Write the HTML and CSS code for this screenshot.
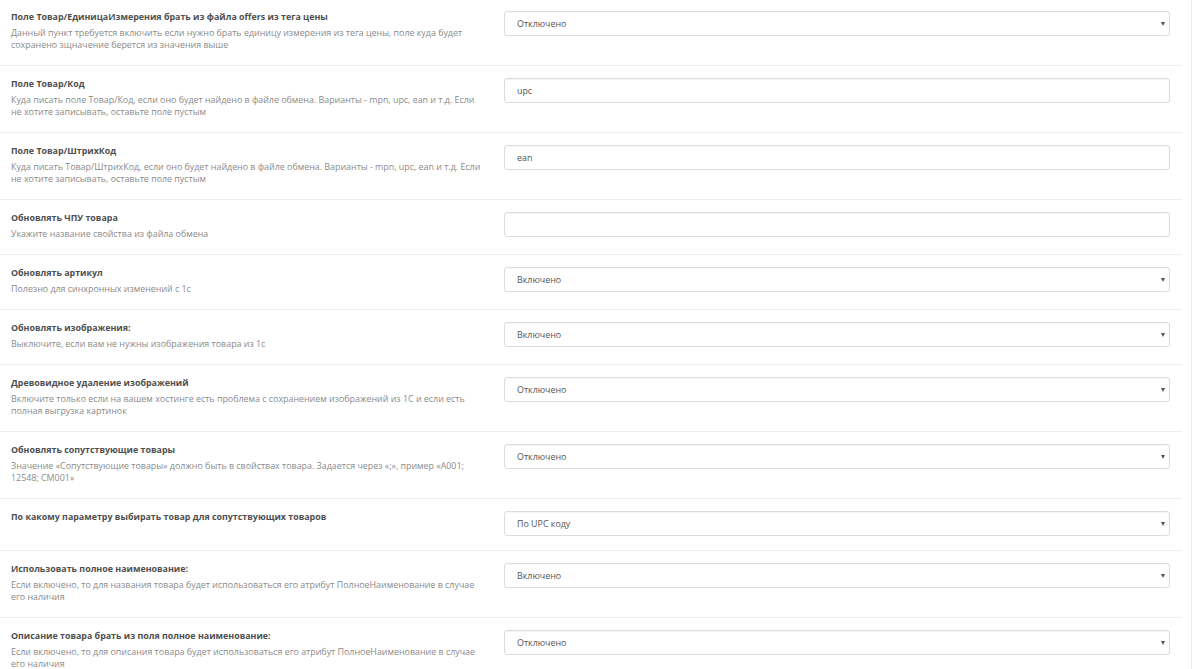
FILE: index.html
```html
<!DOCTYPE html>
<html lang="ru">
<head>
    <meta charset="UTF-8">
    <title>Настройки обмена</title>
    <link rel="stylesheet" href="styles.css">
</head>
<body>
    <div class="page">
        <div class="settings">

            <!-- Единица измерения -->
            <div class="form-row">
                <div class="form-label">
                    <div class="title">Поле Товар/ЕдиницаИзмерения брать из файла offers из тега цены</div>
                    <div class="help">Данный пункт требуется включить если нужно брать единицу измерения из тега цены, поле куда будет сохранено зщначение берется из значения выше</div>
                </div>
                <div class="form-field">
                    <div class="select-wrap">
                        <select class="form-control">
                            <option>Отключено</option>
                            <option>Включено</option>
                        </select>
                    </div>
                </div>
            </div>

            <div class="form-row">
                <div class="form-label">
                    <div class="title">Поле Товар/Код</div>
                    <div class="help">Куда писать поле Товар/Код, если оно будет найдено в файле обмена. Варианты - mpn, upc, ean и т.д. Если не хотите записывать, оставьте поле пустым</div>
                </div>
                <div class="form-field">
                    <input type="text" class="form-control" value="upc">
                </div>
            </div>

            <div class="form-row">
                <div class="form-label">
                    <div class="title">Поле Товар/ШтрихКод</div>
                    <div class="help">Куда писать Товар/ШтрихКод, если оно будет найдено в файле обмена. Варианты - mpn, upc, ean и т.д. Если не хотите записывать, оставьте поле пустым</div>
                </div>
                <div class="form-field">
                    <input type="text" class="form-control" value="ean">
                </div>
            </div>

            <div class="form-row">
                <div class="form-label">
                    <div class="title">Обновлять ЧПУ товара</div>
                    <div class="help">Укажите название свойства из файла обмена</div>
                </div>
                <div class="form-field">
                    <input type="text" class="form-control" value="">
                </div>
            </div>

            <div class="form-row">
                <div class="form-label">
                    <div class="title">Обновлять артикул</div>
                    <div class="help">Полезно для синхронных изменений с 1с</div>
                </div>
                <div class="form-field">
                    <div class="select-wrap">
                        <select class="form-control">
                            <option>Включено</option>
                            <option>Отключено</option>
                        </select>
                    </div>
                </div>
            </div>

            <div class="form-row">
                <div class="form-label">
                    <div class="title">Обновлять изображения:</div>
                    <div class="help">Выключите, если вам не нужны изображения товара из 1с</div>
                </div>
                <div class="form-field">
                    <div class="select-wrap">
                        <select class="form-control">
                            <option>Включено</option>
                            <option>Отключено</option>
                        </select>
                    </div>
                </div>
            </div>

            <div class="form-row">
                <div class="form-label">
                    <div class="title">Древовидное удаление изображений</div>
                    <div class="help">Включите только если на вашем хостинге есть проблема с сохранением изображений из 1С и если есть полная выгрузка картинок</div>
                </div>
                <div class="form-field">
                    <div class="select-wrap">
                        <select class="form-control">
                            <option>Отключено</option>
                            <option>Включено</option>
                        </select>
                    </div>
                </div>
            </div>

            <div class="form-row">
                <div class="form-label">
                    <div class="title">Обновлять сопутствующие товары</div>
                    <div class="help">Значение «Сопутствующие товары» должно быть в свойствах товара. Задается через «;», пример «A001; 12548; CM001»</div>
                </div>
                <div class="form-field">
                    <div class="select-wrap">
                        <select class="form-control">
                            <option>Отключено</option>
                            <option>Включено</option>
                        </select>
                    </div>
                </div>
            </div>

            <div class="form-row">
                <div class="form-label">
                    <div class="title">По какому параметру выбирать товар для сопутствующих товаров</div>
                </div>
                <div class="form-field">
                    <div class="select-wrap">
                        <select class="form-control">
                            <option>По UPC коду</option>
                            <option>По артикулу</option>
                        </select>
                    </div>
                </div>
            </div>

            <div class="form-row">
                <div class="form-label">
                    <div class="title">Использовать полное наименование:</div>
                    <div class="help">Если включено, то для названия товара будет использоваться его атрибут ПолноеНаименование в случае его наличия</div>
                </div>
                <div class="form-field">
                    <div class="select-wrap">
                        <select class="form-control">
                            <option>Включено</option>
                            <option>Отключено</option>
                        </select>
                    </div>
                </div>
            </div>

            <div class="form-row">
                <div class="form-label">
                    <div class="title">Описание товара брать из поля полное наименование:</div>
                    <div class="help">Если включено, то для описания товара будет использоваться его атрибут ПолноеНаименование в случае его наличия</div>
                </div>
                <div class="form-field">
                    <div class="select-wrap">
                        <select class="form-control">
                            <option>Отключено</option>
                            <option>Включено</option>
                        </select>
                    </div>
                </div>
            </div>

        </div>
    </div>
</body>
</html>
```

FILE: styles.css
```css
body {
    margin: 0;
    background: #fff;
    font-family: "Open Sans", "Liberation Sans", sans-serif;
    color: #555;
}

.page {
    width: 1192px;
    min-height: 669px;
    border-right: 1px solid #ececec;
    box-sizing: border-box;
}

.settings {
    width: 1182px;
    margin-top: -1px;
}

.form-row {
    display: grid;
    grid-template-columns: 492px 1fr;
    align-items: start;
    padding: 12px 0 14px;
    border-bottom: 1px solid #eeeeee;
}

.form-label {
    padding: 0 8px 0 11px;
}

.title {
    font-size: 8.9px;
    font-weight: 700;
    line-height: 12px;
    color: #4f4f4f;
    margin-bottom: 4px;
}

.help {
    font-size: 8.9px;
    line-height: 12px;
    color: #8a8a8a;
}

.form-field {
    padding: 0 12px;
}

.form-control {
    display: block;
    width: 100%;
    height: 25px;
    padding: 0 12px;
    border: 1px solid #dcdcdc;
    border-radius: 3px;
    box-sizing: border-box;
    background: #fff;
    font-family: "Open Sans", "Liberation Sans", sans-serif;
    font-size: 8.9px;
    color: #555;
    box-shadow: inset 0 1px 1px rgba(0, 0, 0, 0.04);
}

select.form-control {
    appearance: none;
    -webkit-appearance: none;
}

.select-wrap {
    position: relative;
}

.select-wrap::after {
    content: "";
    position: absolute;
    right: 5px;
    top: 11px;
    border-left: 2.5px solid transparent;
    border-right: 2.5px solid transparent;
    border-top: 4px solid #555;
}
```
